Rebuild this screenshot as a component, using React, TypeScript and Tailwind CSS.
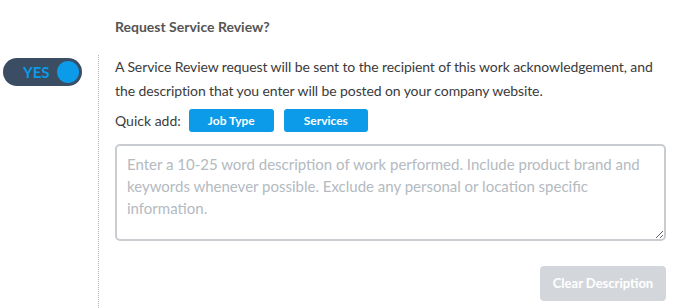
export default function App() {
  return (
    <div className="w-[677px] h-[308px] bg-white overflow-hidden font-['Lato',sans-serif]">
      <div className="pl-[115px] pt-[17px] h-[55px] text-[14px] leading-5 font-bold text-[#555555]">
        Request Service Review?
      </div>
      <div className="flex h-[253px]">
        <div className="w-[98px] shrink-0 pl-[3px] pt-[3px]">
          <button className="flex items-center justify-between w-[79px] h-[28px] rounded-full bg-[#3a4d63] pl-[20px] pr-[3px]">
            <span className="text-[15px] font-bold text-[#0b9be9] leading-none">YES</span>
            <span className="w-[22px] h-[22px] rounded-full bg-[#0b9be9]" />
          </button>
        </div>
        <div className="flex-1 border-l border-dotted border-[#b5b5b5] pl-4 pr-[11px]">
          <p className="text-[14px] leading-6 text-[#3b3b3b] tracking-[-0.1px]">
            A Service Review request will be sent to the recipient of this work acknowledgement, and the description that you enter will be posted on your company website.
          </p>
          <div className="flex items-center mt-[6px] h-[23px]">
            <span className="text-[14px] text-[#3b3b3b] mr-[8px]">Quick add:</span>
            <button className="w-[85px] h-[23px] rounded-[3px] bg-[#0b9be9] text-white text-[12px] font-bold">Job Type</button>
            <button className="ml-[10px] w-[84px] h-[23px] rounded-[3px] bg-[#0b9be9] text-white text-[12px] font-bold">Services</button>
          </div>
          <textarea
            className="mt-3 block w-full h-[97px] rounded-[5px] border-2 border-[#c9cdd1] px-[10px] pt-[7px] pb-[6px] text-[15px] leading-[22px] text-[#3b3b3b] placeholder:text-[#b3bac1] outline-none"
            placeholder="Enter a 10-25 word description of work performed. Include product brand and keywords whenever possible. Exclude any personal or location specific information."
          />
          <div className="flex justify-end mt-[25px]">
            <button className="w-[126px] h-[35px] rounded-[4px] bg-[#d3d7db] text-white text-[13px] font-bold">Clear Description</button>
          </div>
        </div>
      </div>
    </div>
  )
}
